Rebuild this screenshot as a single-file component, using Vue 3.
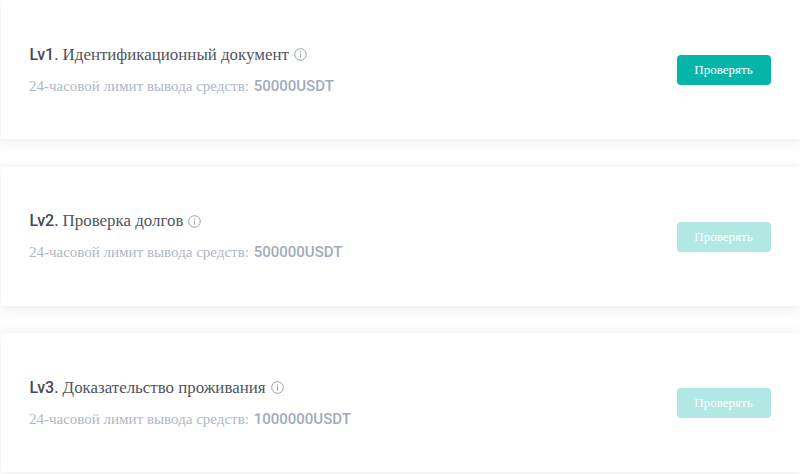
<script setup>
const levels = [
  { id: 'Lv1', title: 'Идентификационный документ', limit: '50000USDT', active: true },
  { id: 'Lv2', title: 'Проверка долгов', limit: '500000USDT', active: false },
  { id: 'Lv3', title: 'Доказательство проживания', limit: '1000000USDT', active: false }
]
</script>

<template>
  <div class="page">
    <div v-for="l in levels" :key="l.id" class="card">
      <div class="info">
        <div class="title">
          <b class="lv">{{ l.id }}</b><span>. {{ l.title }}</span>
          <svg class="icon" width="13" height="13" viewBox="0 0 13 13" fill="none" stroke="#9aa1ad">
            <circle cx="6.5" cy="6.5" r="5.8" />
            <path d="M6.5 5.6V9.6M6.5 3.4V4.6" />
          </svg>
        </div>
        <div class="limit">24-часовой лимит вывода средств: <b class="amount">{{ l.limit }}</b></div>
      </div>
      <button class="btn" :class="{ off: !l.active }">Проверять</button>
    </div>
  </div>
</template>

<style scoped>
.page { width: 800px; height: 474px; overflow: hidden; background: #fff; display: flex; flex-direction: column; gap: 27.5px; box-sizing: border-box; }
.card { flex: none; height: 139px; box-sizing: border-box; margin-left: 1px; padding: 1.4px 29px 0 28px; display: flex; align-items: center; justify-content: space-between; background: #fff; box-shadow: 0 2px 12px rgba(40, 50, 70, 0.1); }
.title { font-family: "Liberation Serif", serif; font-size: 16.9px; color: #4f5460; display: flex; align-items: center; line-height: 20px; white-space: pre; }
.lv { font-family: Roboto, sans-serif; font-weight: 500; font-size: 16px; color: #464b57; margin-left: 0.5px; }
.icon { margin-left: 5px; }
.limit { margin-top: 11px; font-family: "Liberation Serif", serif; font-size: 15px; color: #b0b7c4; line-height: 20px; }
.amount { font-family: Roboto, sans-serif; font-weight: 500; font-size: 15px; color: #a2abba; margin-left: 1px; }
.btn { width: 94px; height: 30px; border: 0; border-radius: 4px; background: #06b5aa; color: #fff; font-family: "Liberation Serif", serif; font-size: 13px; padding: 0 1px 0 0; }
.btn.off { background: #b2e8e4; }
</style>
